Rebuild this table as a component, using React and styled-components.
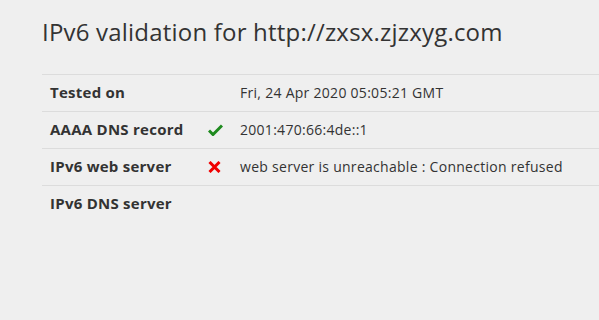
import React from "react";
import styled, { createGlobalStyle } from "styled-components";

const GlobalStyle = createGlobalStyle`
  html, body {
    margin: 0;
    padding: 0;
    background: #efefef;
  }
  body {
    font-family: "Open Sans", "Liberation Sans", sans-serif;
    font-size: 14px;
    line-height: 1.42857;
    color: #333;
  }
`;

const Page = styled.div`
  padding: 13px 0 0 42px;
  height: 320px;
  box-sizing: border-box;
  overflow: hidden;
`;

const Title = styled.h1`
  margin: 0 0 24px;
  font-size: 24px;
  font-weight: 400;
  line-height: 37px;
  letter-spacing: 0.2px;
  color: #333;
`;

const Table = styled.table`
  width: 580px;
  border-collapse: collapse;
`;

const Cell = styled.td`
  padding: 8px;
  border-top: 1px solid #dcdcdc;
  vertical-align: middle;
  text-align: left;
  white-space: nowrap;
  height: 20px;
`;

const Label = styled(Cell)`
  width: 142px;
  padding-top: 7px;
  padding-bottom: 9px;
  font-size: 15px;
  line-height: 20px;
  font-weight: 700;
  letter-spacing: 0.25px;
`;

const IconCell = styled(Cell)`
  width: 16px;
  line-height: 0;
`;

const Value = styled(Cell)`
  letter-spacing: 0.28px;
`;

const Check = () => (
  <svg width="15" height="12" viewBox="0 0 15 12">
    <path d="M1 6.5 L5 10.5 L14 1.5" fill="none" stroke="#1e8a1e" strokeWidth="3" />
  </svg>
);

const Cross = () => (
  <svg width="13" height="12" viewBox="0 0 13 12">
    <path d="M1.5 1 L11.5 11 M11.5 1 L1.5 11" fill="none" stroke="#f00000" strokeWidth="3" />
  </svg>
);

const rows = [
  { label: "Tested on", icon: null, value: "Fri, 24 Apr 2020 05:05:21 GMT" },
  { label: "AAAA DNS record", icon: "ok", value: "2001:470:66:4de::1" },
  { label: "IPv6 web server", icon: "fail", value: "web server is unreachable : Connection refused" },
  { label: "IPv6 DNS server", icon: null, value: "" },
];

export default function App() {
  return (
    <>
      <GlobalStyle />
      <Page>
        <Title>IPv6 validation for http://zxsx.zjzxyg.com</Title>
        <Table>
          <tbody>
            {rows.map((r) => (
              <tr key={r.label}>
                <Label>{r.label}</Label>
                <IconCell>
                  {r.icon === "ok" && <Check />}
                  {r.icon === "fail" && <Cross />}
                </IconCell>
                <Value>{r.value}</Value>
              </tr>
            ))}
          </tbody>
        </Table>
      </Page>
    </>
  );
}
